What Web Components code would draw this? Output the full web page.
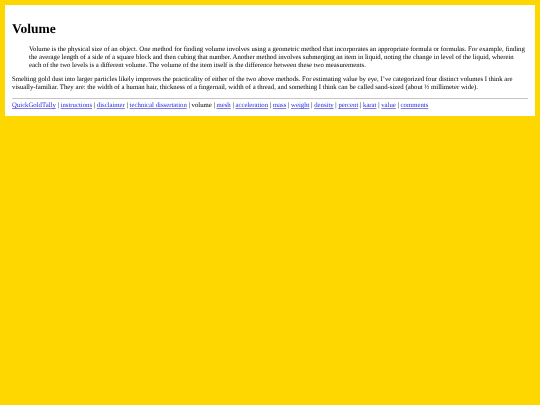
<!DOCTYPE html>
<html lang="en">
<head>
<meta charset="utf-8">
<title>Volume</title>
<style>
  html, body { margin: 0; height: 100%; }
  body { background: #ffd700; font-family: "Liberation Serif", "Times New Roman", serif; font-size: 6.75px; color: #000; text-rendering: geometricPrecision; }
</style>
</head>
<body>
<page-card>
  <h1 slot="title">Volume</h1>
  <indent-block>Volume is the physical size of an object. One method for finding volume involves using a geometric method that incorporates an appropriate formula or formulas. For example, finding the average length of a side of a square block and then cubing that number. Another method involves submerging an item in liquid, noting the change in level of the liquid, wherein each of the two levels is a different volume. The volume of the item itself is the difference between these two measurements.</indent-block>
  <text-para>Smelting gold dust into larger particles likely improves the practicality of either of the two above methods. For estimating value by eye, I’ve categorized four distinct volumes I think are visually-familiar. They are: the width of a human hair, thickness of a fingernail, width of a thread, and something I think can be called sand-sized (about ½ millimeter wide).</text-para>
  <nav-links current="volume" links="QuickGoldTally,instructions,disclaimer,technical dissertation,volume,mesh,acceleration,mass,weight,density,percent,karat,value,comments"></nav-links>
</page-card>
<script>
class PageCard extends HTMLElement {
  constructor() {
    super();
    this.attachShadow({ mode: 'open' });
    this.shadowRoot.innerHTML = `
      <style>
        :host { display: block; box-sizing: border-box; margin: 5.4px 5.2px 0 5px; height: 110.4px; padding: 15.4px 7px 0; background: #fff; filter: blur(0.3px); }
        ::slotted(h1) { margin: 0 0 9.7px; font-size: 13.5px; line-height: 16px; font-weight: bold; }
      </style>
      <slot name="title"></slot>
      <slot></slot>
    `;
  }
}
class IndentBlock extends HTMLElement {
  constructor() {
    super();
    this.attachShadow({ mode: 'open' });
    this.shadowRoot.innerHTML = `
      <style>
        :host { display: block; margin: 0 0 6.8px; padding: 0 2px 0 17px; line-height: 7.7px; }
      </style>
      <slot></slot>
    `;
  }
}
class TextPara extends HTMLElement {
  constructor() {
    super();
    this.attachShadow({ mode: 'open' });
    this.shadowRoot.innerHTML = `
      <style>
        :host { display: block; margin: 0 0 6.2px; line-height: 7.7px; }
      </style>
      <slot></slot>
    `;
  }
}
class NavLinks extends HTMLElement {
  connectedCallback() {
    const current = this.getAttribute('current');
    const items = this.getAttribute('links').split(',').map(name =>
      name === current ? name : `<a href="#">${name}</a>`);
    this.attachShadow({ mode: 'open' });
    this.shadowRoot.innerHTML = `
      <style>
        :host { display: block; line-height: 7.7px; }
        hr { margin: 0 0 3.4px; border: 0; border-top: 1px solid #c4c4c4; }
        a { color: #2a2ae8; text-decoration-color: #8080ee; }
      </style>
      <hr>
      <div>${items.join(' | ')}</div>
    `;
  }
}
customElements.define('page-card', PageCard);
customElements.define('indent-block', IndentBlock);
customElements.define('text-para', TextPara);
customElements.define('nav-links', NavLinks);
</script>
</body>
</html>
